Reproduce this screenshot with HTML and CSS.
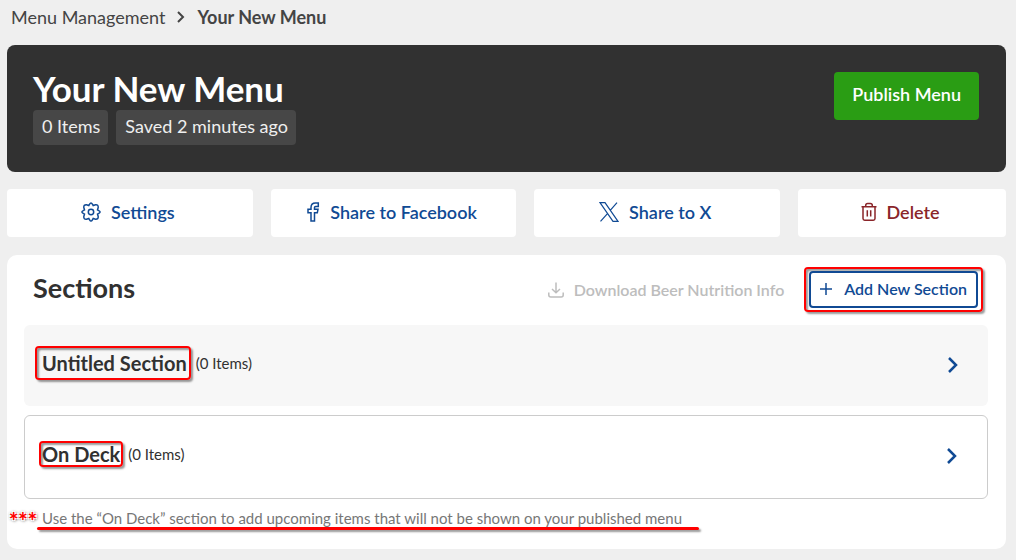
FILE: index.html
```html
<!DOCTYPE html>
<html lang="en">
<head>
  <meta charset="UTF-8">
  <meta name="viewport" content="width=device-width, initial-scale=1.0">
  <title>Your New Menu</title>
  <link rel="stylesheet" href="styles.css">
</head>
<body>
  <nav class="breadcrumb">
    <a href="#">Menu Management</a>
    <svg width="8" height="12" viewBox="0 0 8 12"><path d="M1 1l5 5-5 5"/></svg>
    <strong>Your New Menu</strong>
  </nav>

  <header class="menu-header">
    <div>
      <h1>Your New Menu</h1>
      <div class="tags">
        <span class="tag">0 Items</span>
        <span class="tag">Saved 2 minutes ago</span>
      </div>
    </div>
    <button class="publish" type="button">Publish Menu</button>
  </header>

  <div class="actions">
    <button type="button">
      <svg width="20" height="20" viewBox="0 0 20 20"><path d="M8.6 2.2Q10-.4 11.4 2.2L12.2 3.5 14.5 2.8Q17.400 2.500 17.200 5.500L16.500 7.800 17.800 8.600Q20.400 10 17.800 11.400L16.500 12.200 17.200 14.500Q17.500 17.400 14.500 17.200L12.200 16.500 11.400 17.800Q10 20.400 8.600 17.800L7.800 16.500 5.500 17.200Q2.600 17.500 2.800 14.500L3.500 12.200 2.200 11.400Q-.4 10 2.200 8.600L3.500 7.800 2.800 5.500Q2.500 2.600 5.500 2.800L7.800 3.500z"/><circle cx="10" cy="10" r="2.700"/></svg>
      Settings
    </button>
    <button type="button">
      <svg width="14" height="20" viewBox="0 0 14 20"><path d="M12.300 1H9.500Q5 1 5 5.500V7.300H2V10.700H5V19H8.500V10.700H11.300L12 7.300H8.500V5.500Q8.500 4.400 9.700 4.400H12.300z"/></svg>
      Share to Facebook
    </button>
    <button type="button">
      <svg class="icon-x" width="20" height="20" viewBox="0 0 20 20"><path d="M1 .7H6L19 19.300H14zM18 .7L11 8.700M8.700 11.300L1.500 19.300"/></svg>
      Share to X
    </button>
    <button class="danger" type="button">
      <svg width="16" height="20" viewBox="0 0 16 20"><path d="M.5 4.800H15.500M2 5V16.500Q2 18.200 3.700 18.200H12.300Q14 18.200 14 16.500V5M4.700 4.500V3.500Q4.700 1.500 6.700 1.500H9.300Q11.300 1.500 11.300 3.500V4.500M6.300 8.300V14.500M9.700 8.300V14.500"/></svg>
      Delete
    </button>
  </div>

  <main class="panel">
    <div class="panel-head">
      <h2>Sections</h2>
      <button class="download" type="button" disabled>
        <svg width="16" height="16" viewBox="0 0 16 16"><path d="M8 .5V10.500M4 7L8 10.700 12 7M.8 10.500V13Q.8 15 2.800 15H13.200Q15.200 15 15.200 13V10.500"/></svg>
        Download Beer Nutrition Info
      </button>
      <div class="callout callout-add">
        <button class="add" type="button">
          <svg width="12" height="12" viewBox="0 0 12 12"><path d="M6 0V12M0 6H12"/></svg>
          Add New Section
        </button>
      </div>
    </div>

    <a class="section" href="#">
      <h3 class="callout">Untitled Section</h3>
      <span>(0 Items)</span>
      <svg width="12" height="18" viewBox="0 0 12 18"><path d="M2 2l7 7-7 7"/></svg>
    </a>
    <a class="section on-deck" href="#">
      <h3 class="callout">On Deck</h3>
      <span>(0 Items)</span>
      <svg width="12" height="18" viewBox="0 0 12 18"><path d="M2 2l7 7-7 7"/></svg>
    </a>

    <p class="note"><span class="stars">***</span>Use the “On Deck” section to add upcoming items that will not be shown on your published menu</p>
  </main>
</body>
</html>
```

FILE: styles.css
```css
* {
  box-sizing: border-box;
}

body {
  margin: 0;
  padding: 5px 10px 12px 7px;
  background: #efefef;
  color: #313131;
  font-family: Lato, "Open Sans", sans-serif;
  font-size: 18px;
  line-height: 24px;
}

h1, h2, h3, p {
  margin: 0;
}

a {
  color: inherit;
  text-decoration: none;
}

button {
  font: inherit;
  font-weight: 600;
  border: 0;
  border-radius: 4px;
  cursor: pointer;
}

svg {
  flex: none;
  fill: none;
  stroke: currentColor;
  stroke-width: 1.5;
}

.breadcrumb {
  display: flex;
  align-items: center;
  gap: 12px;
  padding-left: 4px;
  color: #444;
}

.breadcrumb svg {
  stroke-width: 2;
}

/* dark title bar */
.menu-header {
  display: flex;
  justify-content: space-between;
  align-items: flex-start;
  margin-top: 16px;
  padding: 24px 27px 27px 26px;
  border-radius: 8px;
  background: #313131;
  color: #fff;
}

.menu-header h1 {
  padding-bottom: 3px;
  font-size: 35px;
  line-height: 38px;
}

.tags {
  display: flex;
  gap: 8px;
}

.tag {
  padding: 4px 8px 7px 9px;
  border-radius: 4px;
  background: #474747;
  color: #efefef;
}

.publish {
  margin-top: 3px;
  padding: 10px 18px 14px;
  background: #2a9d14;
  color: #fff;
}

.actions {
  display: grid;
  grid-template-columns: 13fr 13fr 13fr 11fr;
  gap: 18px;
  margin: 17px 0 18px;
}

.actions button {
  display: flex;
  align-items: center;
  justify-content: center;
  gap: 10px;
  padding: 11px 14px 13px 10px;
  background: #fff;
  color: #104a94;
}

.actions .icon-x {
  stroke-width: 1.2;
}

.actions .danger {
  color: #8a2529;
}

.panel {
  padding: 12px 18px 19px 17px;
  border-radius: 10px;
  background: #fff;
}

.panel-head {
  display: flex;
  align-items: center;
  padding: 0 5px 13px 9px;
}

.panel-head h2 {
  margin-right: auto;
  padding-bottom: 4px;
  font-size: 27px;
  line-height: 32px;
}

.panel-head button {
  display: flex;
  align-items: center;
  gap: 10px;
  background: none;
}

.panel-head .download {
  margin-right: 14px;
  color: #bdbdbd;
  cursor: default;
}

.panel-head .add {
  gap: 12px;
  padding: 4px 9px 5px;
  border: 2px solid #104a94;
  background: #fff;
  color: #104a94;
}

.download, .add {
  font-size: 16px;
}

/* red highlight frame */
.callout {
  border: 2px solid #f00;
  border-radius: 4px;
  box-shadow: 2px 2px 2px #0006, inset 2px 2px 2px #0006;
}

.callout-add {
  padding: 2px 3px;
}

.section {
  display: flex;
  align-items: center;
  padding: 21px 29px 26px 11px;
  border-radius: 6px;
  background: #f7f7f7;
}

.section h3 {
  padding: 3px 2px 3px 5px;
  font-size: 20px;
  line-height: 24px;
}

.section span {
  padding-left: 5px;
  font-size: 15px;
}

.section svg {
  margin: 3px 0 0 auto;
  color: #104a94;
  stroke-width: 2.5;
}

.on-deck {
  margin-top: 9px;
  padding: 25px 29px 31px 14px;
  border: 1px solid #ccc;
  background: #fff;
}

.on-deck h3 {
  padding: 0 1px;
  line-height: 22px;
}

.note {
  position: relative;
  width: fit-content;
  margin: 9px 0 0 13px;
  padding: 0 17px 2px 5px;
  color: #777;
  font-size: 15px;
  line-height: 20px;
}

/* red underline */
.note::after {
  content: '';
  position: absolute;
  left: 0;
  bottom: 0;
  width: 100%;
  height: 3px;
  border-radius: 2px;
  background: #f00;
  box-shadow: 2px 2px 2px #0006;
}

.stars {
  position: absolute;
  right: 100%;
  top: 3px;
  color: #f00;
  font-size: 22px;
  font-weight: 900;
  text-shadow: 1px 1px #fff, -1px -1px #fff, 1px -1px #fff, -1px 1px #fff, 0 0 3px #444, 1px 1px 3px #444;
}
```
